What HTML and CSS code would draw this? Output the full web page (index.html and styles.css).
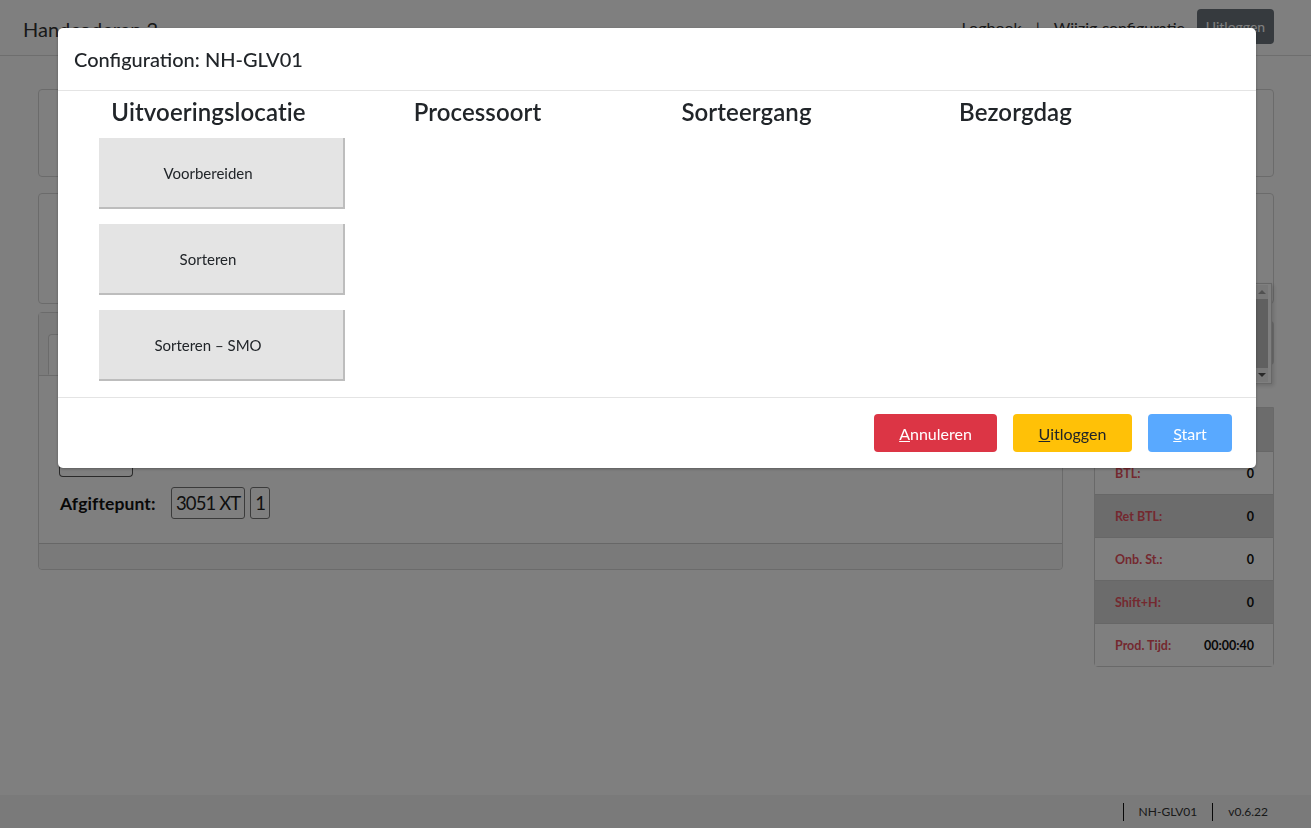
FILE: index.html
```html
<!DOCTYPE html>
<html lang="nl">
<head>
<meta charset="utf-8">
<title>Handcoderen 2</title>
<link rel="stylesheet" href="styles.css">
</head>
<body>
<div class="app">
  <header class="topbar">
    <div class="brand">Handcoderen 2</div>
    <nav class="topnav">
      <a class="navlink">Logbook</a>
      <span class="navsep">|</span>
      <a class="navlink">Wijzig configuratie</a>
      <button class="btn-logout">Uitloggen</button>
    </nav>
  </header>

  <main class="main">
    <section class="card card-a"></section>
    <section class="card card-b"></section>
    <div class="bottom-row">
      <section class="card card-c">
        <div class="card-header">
          <div class="tab">Afgifte</div>
        </div>
        <div class="card-body">
          <div class="small-btn"></div>
          <div class="afgifte">
            <span class="afgifte-label">Afgiftepunt:</span>
            <span class="pill">3051 XT</span>
            <span class="pill">1</span>
          </div>
        </div>
        <div class="card-footer"></div>
      </section>
      <aside class="side">
        <div class="side-btn"></div>
        <div class="side-gap"></div>
        <div class="stats">
          <div class="stat-row dark"><span class="stat-label"></span><span class="stat-val"></span></div>
          <div class="stat-row"><span class="stat-label">BTL:</span><span class="stat-val">0</span></div>
          <div class="stat-row dark"><span class="stat-label">Ret BTL:</span><span class="stat-val">0</span></div>
          <div class="stat-row"><span class="stat-label">Onb. St.:</span><span class="stat-val">0</span></div>
          <div class="stat-row dark"><span class="stat-label">Shift+H:</span><span class="stat-val">0</span></div>
          <div class="stat-row"><span class="stat-label">Prod. Tijd:</span><span class="stat-val">00:00:40</span></div>
        </div>
      </aside>
    </div>
    <div class="listbox">
      <div class="lb-scroll">
        <span class="lb-arrow up"></span>
        <span class="lb-thumb"></span>
        <span class="lb-arrow down"></span>
      </div>
    </div>
  </main>

  <footer class="statusbar">
    <span class="status-item">NH-GLV01</span>
    <span class="status-item">v0.6.22</span>
  </footer>
</div>

<div class="backdrop"></div>

<div class="modal">
  <div class="modal-header">
    <h5 class="modal-title">Configuration: NH-GLV01</h5>
  </div>
  <div class="modal-body">
    <div class="config-col">
      <h4 class="col-title">Uitvoeringslocatie</h4>
      <div class="choices">
        <button class="choice">Voorbereiden</button>
        <button class="choice">Sorteren</button>
        <button class="choice">Sorteren – SMO</button>
      </div>
    </div>
    <div class="config-col">
      <h4 class="col-title">Processoort</h4>
    </div>
    <div class="config-col">
      <h4 class="col-title">Sorteergang</h4>
    </div>
    <div class="config-col">
      <h4 class="col-title">Bezorgdag</h4>
    </div>
  </div>
  <div class="modal-footer">
    <button class="btn btn-danger"><u>A</u>nnuleren</button>
    <button class="btn btn-warning"><u>U</u>itloggen</button>
    <button class="btn btn-primary-disabled"><u>S</u>tart</button>
  </div>
</div>
</body>
</html>
```

FILE: styles.css
```css
* {
  box-sizing: border-box;
}

html, body {
  margin: 0;
  padding: 0;
}

body {
  font-family: "Lato", "Noto Sans", "Liberation Sans", sans-serif;
  color: #212529;
  background: #ffffff;
  width: 1311px;
  height: 828px;
  overflow: hidden;
}

.app {
  display: flex;
  flex-direction: column;
  height: 828px;
  position: relative;
}

/* top bar */
.topbar {
  height: 56px;
  flex: none;
  display: flex;
  align-items: center;
  justify-content: space-between;
  padding: 0 37px 0 23px;
  border-bottom: 1px solid #dcdcdc;
}

.brand {
  font-size: 20px;
  color: #333;
  padding-top: 2px;
}

.topnav {
  display: flex;
  align-items: center;
  gap: 12px;
  font-size: 16px;
  color: #333;
}

.navsep {
  padding: 0 2px;
}

.btn-logout {
  height: 35px;
  width: 77px;
  border: 0;
  border-radius: 4px;
  background: #6c757d;
  color: #fff;
  font-family: inherit;
  font-size: 14px;
  margin-top: -2px;
}

/* main content */
.main {
  flex: 1;
  padding: 33px 37px 0 38px;
  display: flex;
  flex-direction: column;
  position: relative;
}

.card {
  border: 1px solid #d6d6d6;
  border-radius: 4px;
  background: #fff;
}

.card-a {
  height: 88px;
}

.card-b {
  height: 111px;
  margin-top: 16px;
}

.bottom-row {
  display: grid;
  grid-template-columns: 1025px 180px;
  column-gap: 31px;
  align-items: start;
}

.card-c {
  margin-top: 8px;
  height: 258px;
  display: flex;
  flex-direction: column;
}

.card-header {
  height: 63px;
  background: #f7f7f7;
  border-bottom: 1px solid #d6d6d6;
  padding: 22px 0 0 9px;
  display: flex;
  align-items: flex-end;
  margin-bottom: -1px;
}

.tab {
  width: 90px;
  height: 41px;
  background: #fff;
  border: 1px solid #d6d6d6;
  border-bottom-color: #fff;
  border-radius: 4px 4px 0 0;
  font-size: 15px;
  padding: 10px 14px;
  color: #333;
}

.card-body {
  flex: 1;
  padding: 80px 20px 0 20px;
}

.small-btn {
  width: 74px;
  height: 22px;
  border: 1px solid #555;
  border-top: 0;
  border-radius: 0 0 4px 4px;
}

.afgifte {
  display: flex;
  align-items: center;
  margin-top: 10px;
  gap: 5px;
}

.afgifte-label {
  font-weight: 700;
  font-size: 17.5px;
  width: 107px;
  color: #111;
  letter-spacing: 0.1px;
  padding-left: 1px;
}

.pill {
  border: 1px solid #777;
  border-radius: 3px;
  height: 32px;
  padding: 4px 4px;
  font-size: 18.5px;
  line-height: 22px;
  color: #222;
  letter-spacing: -0.9px;
}

.card-footer {
  height: 26px;
  background: #f4f4f4;
  border-top: 1px solid #cfcfcf;
  border-radius: 0 0 4px 4px;
}

.side {
  display: flex;
  flex-direction: column;
  margin-top: 17px;
}

.side-btn {
  height: 44px;
  background: #dadada;
  border-radius: 4px;
}

.side-gap {
  height: 42px;
}

.stats {
  border: 1px solid #d2d2d2;
  border-radius: 0 0 4px 4px;
}

.stat-row {
  height: 43px;
  display: flex;
  align-items: center;
  justify-content: space-between;
  padding: 0 19px 0 20px;
  font-size: 12.5px;
  font-weight: 700;
  border-top: 1px solid #cfcfcf;
  background: #fff;
}

.stat-row:first-child {
  border-top: 0;
}

.stat-row.dark {
  background: #d8d8d8;
}

.stat-label {
  color: #e8525f;
}

.stat-val {
  color: #111;
}

.listbox {
  position: absolute;
  top: 227px;
  left: 1100px;
  width: 172px;
  height: 101px;
  border: 1px solid #cfcfcf;
  background: #fff;
  display: flex;
  justify-content: flex-end;
  box-shadow: 2px 2px 4px rgba(0, 0, 0, 0.15);
}

.lb-scroll {
  width: 13px;
  margin: 1px 3px 1px 0;
  background: #f0f0f0;
  display: flex;
  flex-direction: column;
  align-items: center;
}

.lb-arrow {
  width: 0;
  height: 0;
  border-left: 4px solid transparent;
  border-right: 4px solid transparent;
  margin: 5px 0;
}

.lb-arrow.up {
  border-bottom: 4px solid #a3a3a3;
}

.lb-arrow.down {
  border-top: 4px solid #505050;
}

.lb-thumb {
  flex: 1;
  width: 12px;
  background: #c0c0c0;
}

/* status bar */
.statusbar {
  height: 33px;
  flex: none;
  background: #f4f4f4;
  display: flex;
  justify-content: flex-end;
  align-items: center;
  padding-right: 28px;
  font-size: 12px;
  color: #333;
}

.status-item {
  border-left: 1px solid #111;
  padding: 1px 15px 1px 15px;
  line-height: 16px;
}

/* modal */
.backdrop {
  position: fixed;
  inset: 0;
  background: rgba(0, 0, 0, 0.5);
}

.modal {
  position: fixed;
  left: 58px;
  top: 28px;
  width: 1198px;
  background: #fff;
  border-radius: 5px;
  box-shadow: 0 1px 3px rgba(0, 0, 0, 0.3);
  overflow: hidden;
}

.modal-header {
  height: 63px;
  padding: 16px;
  border-bottom: 1px solid #e4e4e4;
}

.modal-title {
  margin: 0;
  font-size: 20px;
  font-weight: 500;
  line-height: 30px;
  color: #212529;
}

.modal-body {
  display: grid;
  grid-template-columns: repeat(4, 269px);
  padding: 6px 16px 16px;
  height: 306px;
}

.col-title {
  margin: 0 0 12px;
  text-align: center;
  font-size: 24px;
  font-weight: 600;
  line-height: 29px;
  color: #212529;
  letter-spacing: 0.1px;
}

.choices {
  display: flex;
  flex-direction: column;
  gap: 15px;
  padding-left: 25px;
}

.choice {
  width: 246px;
  height: 71px;
  border: 0;
  border-right: 2px solid #bdbdbd;
  border-bottom: 2px solid #bdbdbd;
  background: #e4e4e4;
  font-family: inherit;
  font-size: 15px;
  color: #212529;
  padding: 0 26px 0 0;
  text-align: center;
}

.modal-footer {
  height: 71px;
  border-top: 1px solid #e4e4e4;
  display: flex;
  justify-content: flex-end;
  align-items: center;
  gap: 16px;
  padding: 0 24px 0 16px;
}

.btn {
  height: 38px;
  border: 0;
  border-radius: 4px;
  font-family: inherit;
  font-size: 16px;
  padding: 0;
}

.btn-danger {
  width: 123px;
  background: #dc3545;
  color: #fff;
}

.btn-warning {
  width: 119px;
  background: #ffc107;
  color: #212529;
}

.btn-primary-disabled {
  width: 84px;
  background: #59a9ff;
  color: #fff;
}
```
